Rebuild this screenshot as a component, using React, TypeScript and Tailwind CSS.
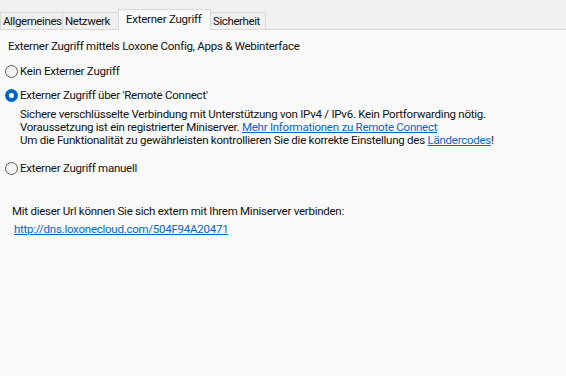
import React from "react";

const tabs = [
  { label: "Allgemeines", w: "w-[63px]" },
  { label: "Netzwerk", w: "w-[57px]" },
  { label: "Externer Zugriff", w: "w-[93px]" },
  { label: "Sicherheit", w: "w-[56px]" },
];

const Radio = ({ checked }: { checked?: boolean }) =>
  checked ? (
    <span className="w-[13px] h-[13px] rounded-full bg-[#0067c0] flex items-center justify-center shrink-0">
      <span className="w-[5px] h-[5px] rounded-full bg-white" />
    </span>
  ) : (
    <span className="w-[13px] h-[13px] rounded-full border border-[#5a5a5a] bg-[#f4f4f4] shrink-0" />
  );

const Option = ({ label, checked }: { label: string; checked?: boolean }) => (
  <div className="flex items-center gap-[2px] pl-[5px] h-[16px]">
    <Radio checked={checked} />
    <span>{label}</span>
  </div>
);

export default function App() {
  return (
    <div
      className="w-[566px] h-[376px] bg-[#f0f0f0] text-[11.5px] leading-[13px] tracking-[-0.25px] text-[#111] flex flex-col overflow-hidden"
      style={{ fontFamily: 'Roboto, "Liberation Sans", Arial, sans-serif' }}
    >
      <div className="h-[29px] flex items-end relative z-10">
        {tabs.map((t) => {
          const active = t.label === "Externer Zugriff";
          return (
            <div
              key={t.label}
              className={
                active
                  ? `${t.w} h-[21px] pl-[7px] pt-[3px] border border-b-0 border-[#d9d9d9] bg-[#f9f9f9] -mb-px -ml-px whitespace-nowrap`
                  : `${t.w} h-[17px] pl-[2px] pt-[2px] border border-b-0 border-[#d9d9d9] bg-[#f0f0f0] -ml-px first:ml-0 whitespace-nowrap tracking-[-0.4px]`
              }
            >
              {t.label}
            </div>
          );
        })}
      </div>
      <div className="flex-1 bg-[#f9f9f9] border-t border-[#d9d9d9] flex flex-col">
        <div className="pl-[8px] mt-[10px]">
          Externer Zugriff mittels Loxone Config, Apps &amp; Webinterface
        </div>
        <div className="mt-[10px]">
          <Option label="Kein Externer Zugriff" />
        </div>
        <div className="mt-[8px]">
          <Option label="Externer Zugriff über 'Remote Connect'" checked />
        </div>
        <div className="pl-[20px] mt-[5px] flex flex-col">
          <div>Sichere verschlüsselte Verbindung mit Unterstützung von IPv4 / IPv6. Kein Portforwarding nötig.</div>
          <div>
            Voraussetzung ist ein registrierter Miniserver.{" "}
            <span className="text-[#0a64c8] underline">Mehr Informationen zu Remote Connect</span>
          </div>
          <div>
            Um die Funktionalität zu gewährleisten kontrollieren Sie die korrekte Einstellung des{" "}
            <span className="text-[#0a64c8] underline">Ländercodes</span>!
          </div>
        </div>
        <div className="mt-[13px]">
          <Option label="Externer Zugriff manuell" />
        </div>
        <div className="pl-[12px] mt-[29px]">
          Mit dieser Url können Sie sich extern mit Ihrem Miniserver verbinden:
        </div>
        <div className="pl-[14px] mt-[5px] text-[#0a64c8] underline">
          http://dns.loxonecloud.com/504F94A20471
        </div>
      </div>
    </div>
  );
}
